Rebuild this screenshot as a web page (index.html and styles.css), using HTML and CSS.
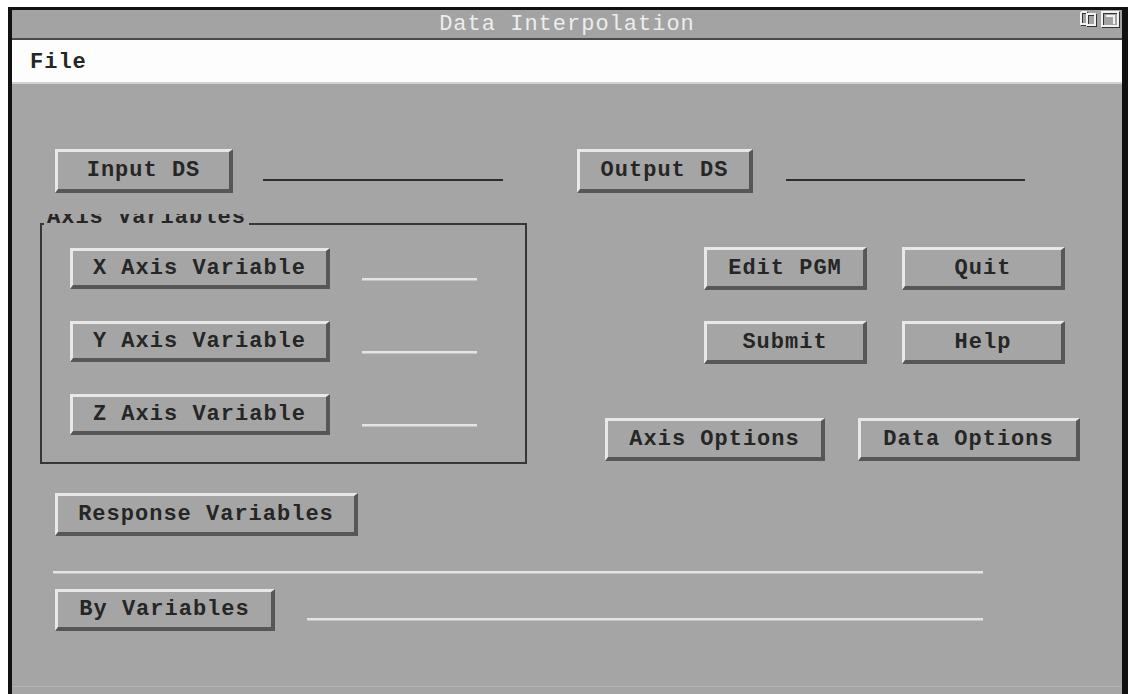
FILE: index.html
```html
<!DOCTYPE html>
<html lang="en">
<head>
  <meta charset="UTF-8" />
  <title>Data Interpolation</title>
  <link rel="stylesheet" href="styles.css">
</head>
<body>
  <div class="window">
    <div class="titlebar">
      <span class="title">Data Interpolation</span>
      <svg class="title-icons" width="44" height="20" viewBox="0 0 44 20">
        <!-- restore -->
        <path d="M3 3 H9 M3 3 V15 H9" stroke="#333" stroke-width="2" fill="none" transform="translate(1,1)"/>
        <path d="M3 3 H9 M3 3 V15 H9" stroke="#f2f2f2" stroke-width="2" fill="none"/>
        <rect x="9" y="5" width="8" height="11" stroke="#333" stroke-width="2" fill="none" transform="translate(1,1)"/>
        <rect x="9" y="5" width="8" height="11" stroke="#f2f2f2" stroke-width="2" fill="none"/>
        <!-- maximize -->
        <rect x="24" y="3" width="16" height="14" stroke="#333" stroke-width="2" fill="none" transform="translate(1,1)"/>
        <rect x="24" y="3" width="16" height="14" stroke="#f2f2f2" stroke-width="2" fill="none"/>
        <path d="M28 7 H36 V15" stroke="#f2f2f2" stroke-width="2" fill="none"/>
      </svg>
    </div>
    <div class="menubar">
      <span class="menu-item">File</span>
    </div>

    <div class="content">
      <div class="row-top">
        <button class="btn btn-input">Input DS</button>
        <span class="field dark field-input"></span>
        <button class="btn btn-output">Output DS</button>
        <span class="field dark field-output"></span>
      </div>

      <div class="middle">
        <div class="left-col">
          <div class="group">
            <div class="group-title"><span>Axis Variables</span></div>
            <div class="axis-row">
              <button class="btn btn-axis">X Axis Variable</button>
              <span class="field light field-axis"></span>
            </div>
            <div class="axis-row">
              <button class="btn btn-axis">Y Axis Variable</button>
              <span class="field light field-axis"></span>
            </div>
            <div class="axis-row">
              <button class="btn btn-axis">Z Axis Variable</button>
              <span class="field light field-axis"></span>
            </div>
          </div>
          <button class="btn btn-response">Response Variables</button>
        </div>

        <div class="right-col">
          <div class="action-grid">
            <button class="btn btn-action">Edit PGM</button>
            <button class="btn btn-action">Quit</button>
            <button class="btn btn-action">Submit</button>
            <button class="btn btn-action">Help</button>
          </div>
          <div class="options-row">
            <button class="btn btn-option">Axis Options</button>
            <button class="btn btn-option">Data Options</button>
          </div>
        </div>
      </div>

      <span class="field light field-response"></span>

      <div class="row-by">
        <button class="btn btn-by">By Variables</button>
        <span class="field light field-by"></span>
      </div>
    </div>
  </div>
</body>
</html>
```

FILE: styles.css
```css
body { margin: 7px 0 0 8px; background: #ffffff; overflow: hidden; font-family: "Liberation Mono", "DejaVu Sans Mono", monospace; font-size: 22px; font-weight: bold; letter-spacing: 1px; color: #262626; }

.window { border-style: solid; border-color: #111; border-width: 3px 6px 0 4px; height: 700px; background: #a5a5a5; }

.titlebar { height: 28px; background: #a3a3a3; border-bottom: 2px solid #4a4a4a; display: flex; align-items: center; justify-content: center; position: relative; }
.title { color: #ededed; font-weight: normal; }
.title-icons { position: absolute; right: 0; top: -1px; }

.menubar { height: 42px; background: #fdfdfd; border-bottom: 2px solid #d2d2d2; display: flex; align-items: center; padding-left: 18px; }
.menu-item { padding-top: 2px; }

.content { padding: 65px 0 0 28px; height: 537px; border-bottom: 1px solid #b3b3b3; }

.btn { font: inherit; letter-spacing: inherit; color: #262626; background: #a5a5a5; box-sizing: border-box; padding: 0; height: 43px; border-style: solid; border-width: 3px 4px 4px 3px; border-color: #e8e8e8 #575757 #575757 #e8e8e8; cursor: pointer; }

.field { display: block; height: 0; }
.field.dark { border-top: 2px solid #2e2e2e; }
.field.light { border-top: 2px solid #e4e4e4; box-shadow: 0 1px 0 #c4c4c4; }

.row-top { display: flex; align-items: center; padding-left: 15px; }
.btn-input { width: 178px; height: 44px; }
.field-input { width: 240px; margin: 18px 0 0 30px; }
.btn-output { width: 176px; height: 44px; margin-left: 74px; }
.field-output { width: 239px; margin: 18px 0 0 33px; }

.middle { display: flex; margin-top: 30px; }

.group { width: 487px; box-sizing: border-box; border: 2px solid #363636; position: relative; padding: 23px 0 27px 28px; }
.group-title { position: absolute; top: -11px; left: 2px; height: 11px; overflow: hidden; padding: 0 3px; background: #a5a5a5; }
.group-title span { display: block; line-height: 22px; margin-top: -7px; }

.axis-row { display: flex; align-items: center; }
.axis-row + .axis-row { margin-top: 32px; }
.btn-axis { width: 260px; height: 41px; }
.field-axis { width: 115px; margin: 20px 0 0 32px; }

.btn-response { width: 303px; margin: 29px 0 0 15px; }

.right-col { margin-left: 78px; padding-top: 24px; }
.action-grid { display: grid; grid-template-columns: 163px 163px; column-gap: 35px; row-gap: 31px; padding-left: 99px; }
.btn-action { width: 163px; }
.options-row { display: flex; gap: 33px; margin-top: 54px; }
.btn-option { width: 220px; }
.btn-option + .btn-option { width: 222px; }

.field-response { width: 930px; margin: 35px 0 0 13px; }

.row-by { display: flex; align-items: center; padding-left: 15px; margin-top: 16px; }
.btn-by { width: 220px; height: 42px; }
.field-by { width: 676px; margin: 18px 0 0 32px; }
```
